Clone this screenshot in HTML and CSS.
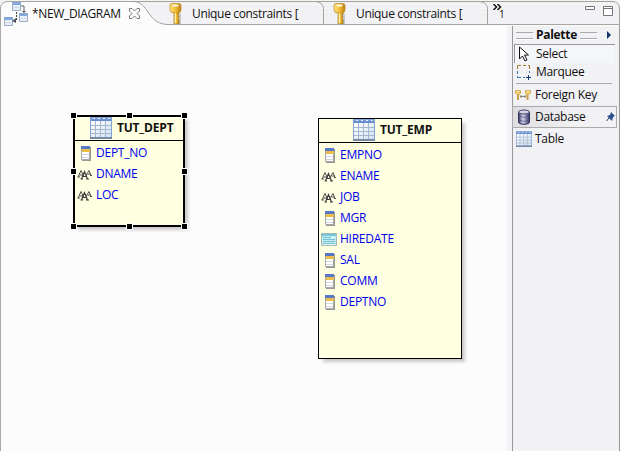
FILE: index.html
```
<!DOCTYPE html>
<html lang="en">
<head>
<meta charset="utf-8">
<title>NEW_DIAGRAM</title>
<link rel="stylesheet" href="styles.css">
</head>
<body>
<svg class="defs" aria-hidden="true">
  <defs>
    <linearGradient id="gold"><stop stop-color="#ffe587"/><stop offset=".5" stop-color="#f2be35"/><stop offset="1" stop-color="#b77e17"/></linearGradient>
    <linearGradient id="blueHead" x2="0" y2="1"><stop stop-color="#86a9dd"/><stop offset="1" stop-color="#5f86cc"/></linearGradient>
    <linearGradient id="cell" x2="1" y2="1"><stop stop-color="#fff"/><stop offset="1" stop-color="#d0e2f5"/></linearGradient>
    <linearGradient id="drum"><stop stop-color="#34345e"/><stop offset=".4" stop-color="#d8d8f0"/><stop offset="1" stop-color="#343467"/></linearGradient>
    <symbol id="key" viewBox="0 0 16 22">
      <path d="M6 10h5v2l-1 1 1 2-1 1 1 2v4H6z" fill="url(#gold)" stroke="#a77b29" stroke-width=".8"/>
      <path d="M4 1.500h7q2 0 2 2v4q0 3.500-3 3.500H6Q2 11 2 7.500v-4q0-2 2-2z" fill="url(#gold)" stroke="#c28e2c" stroke-width=".8"/>
      <path d="M5.500 3.500h4" stroke="#fff8dc" stroke-width="2" stroke-linecap="round"/>
      <path d="M7.500 11v10" stroke="#fff0a8"/>
      <path d="M12 12v10" stroke="#6e6755" opacity=".6"/>
    </symbol>
    <symbol id="table" viewBox="0 0 22 22">
      <path d="M0 0h22v22H0z" fill="#84a3d4"/>
      <path d="M1 0h20v4H1z" fill="url(#blueHead)"/>
      <path d="M1 4h20v16H1z" fill="url(#cell)"/>
      <path d="M1 8.500h20M1 12.500h20M1 16.500h20M5.500 4v16M10.500 4v16M15.500 4v16" stroke="#a7b6ca"/>
      <path d="M3 1.500h2M8 1.500h2M13 1.500h2M18 1.500h2" stroke="#e3edfc"/>
      <path d="M0 21h22" stroke="#7688a4" stroke-width="2"/>
    </symbol>
    <symbol id="column" viewBox="0 0 16 16">
      <path d="M5 2h9v14H5z" fill="#77777a" opacity=".75"/>
      <path d="M4.500 1.500h8v13h-8z" fill="#fff" stroke="#a5a6aa"/>
      <path d="M4 1h9v3H4z" fill="#5777c8"/>
      <path d="M5 4h8v3H5z" fill="#edbd4b"/>
      <path d="M5 9.500h7M5 12.500h7" stroke="#d3d7df"/>
    </symbol>
    <symbol id="text" viewBox="0 0 16 16">
      <g fill="none" stroke="#3d3b3f">
        <path d="m1 11 3-6.500L7 11M2.500 9H6M.500 11h2.500" stroke-width=".9"/>
        <path d="M4.500 13 7.500 5.500 10.500 13M6 10.500h3.500M3.500 13h2.500M9 13h3" stroke-width="1.200"/>
        <path d="m9 9.500 3-5 2 5M10.500 8h3M13 9.500h2" stroke-width=".9"/>
      </g>
    </symbol>
    <symbol id="date" viewBox="0 0 16 16">
      <path d="M.5 2.500h15v12H.5z" fill="#bfeaf0" stroke="#a3b7b4"/>
      <path d="M1 3h14v2H1z" fill="#76c5d8"/>
      <path d="M2 6.500h8M2 8.500h12M2 10.500h12M2 12.500h12" stroke="#78c4d2"/>
      <path d="M10 6.500h4M2 13.500h12" stroke="#edfafa"/>
    </symbol>
  </defs>
</svg>
<div class="editor">
  <header class="tabs">
    <svg class="tab-shape" width="620" height="26" viewBox="0 0 620 26" fill="none">
      <path d="M0 26V7Q2 1.500 8 1.500h125C149 1.500 147 24.500 168 24.500H620V26z" fill="#fcfcfc"/>
      <path d="M.5 26V7Q2 1.500 8 1.500H612Q619.500 1.500 619.500 9V26M133 1.500C149 1.500 147 24.500 168 24.500H620M316 1.500q7 1 7.500 7v16M480 1.500q7 1 7.500 7v16" stroke="#a5a4a0"/>
    </svg>
    <div class="tab tab-active">
      <svg class="diagram-icon" width="24" height="28" viewBox="0 0 24 28">
        <path d="M17 5h3v6M9 20h3" fill="none" stroke="#5b6270"/>
        <path d="M12.500 11v9" stroke="#444" stroke-dasharray="2 1"/>
        <g fill="#e8effa" stroke="#9eacc0"><path d="M8.500 1.500h8v8h-8zM15.500 12.500h8v8h-8zM.500 16.500h8v8H.500z"/></g>
        <path d="M8 1h9v3H8zM15 12h9v3h-9zM0 16h9v3H0z" fill="#86a7d8"/>
        <path d="M10 6.500h5M17 17.500h5M2 21.500h5" stroke="#c9d7eb"/>
        <path d="m8 20 4-3v5z" fill="#50545c"/>
        <path d="m18 10 2 2 2-2z" fill="#50545c"/>
      </svg>
      <span class="tab-name">*NEW_DIAGRAM</span>
      <svg class="close" width="11" height="11" viewBox="0 0 11 11"><path d="M.5.500h2.500l2.500 2.500L8 .500h2.500V3L8 5.500l2.500 2.500v2.500H8L5.500 8 3 10.500H.500V8L3 5.500.500 3z" fill="#fff" stroke="#77777a"/></svg>
    </div>
    <div class="tab tab-one"><svg width="16" height="22"><use href="#key"/></svg><span>Unique constraints [</span></div>
    <div class="tab tab-two"><svg width="16" height="22"><use href="#key"/></svg><span>Unique constraints [</span></div>
    <div class="more"><svg width="9" height="6" viewBox="0 0 9 6"><path d="m.5 0 3 3-3 3m4-6 3 3-3 3" fill="none" stroke="#111" stroke-width="1.500"/></svg><span>1</span></div>
    <svg class="window-buttons" width="30" height="12" viewBox="0 0 30 12" fill="#fff" stroke="#77777a"><path d="M.5 1.500h9v3h-9zM18.500 1.500h9v9h-9zM18.500 3.500h9"/></svg>
  </header>
  <div class="workspace">
    <main class="canvas">
      <section class="entity dept">
        <h2><svg width="22" height="22"><use href="#table"/></svg><span>TUT_DEPT</span></h2>
        <ul>
          <li><svg><use href="#column"/></svg><span>DEPT_NO</span></li>
          <li><svg><use href="#text"/></svg><span>DNAME</span></li>
          <li><svg><use href="#text"/></svg><span>LOC</span></li>
        </ul>
        <i class="handle n w"></i><i class="handle n c"></i><i class="handle n e"></i><i class="handle m w"></i><i class="handle m e"></i><i class="handle s w"></i><i class="handle s c"></i><i class="handle s e"></i>
      </section>
      <section class="entity emp">
        <h2><svg width="22" height="22"><use href="#table"/></svg><span>TUT_EMP</span></h2>
        <ul>
          <li><svg><use href="#column"/></svg><span>EMPNO</span></li>
          <li><svg><use href="#text"/></svg><span>ENAME</span></li>
          <li><svg><use href="#text"/></svg><span>JOB</span></li>
          <li><svg><use href="#column"/></svg><span>MGR</span></li>
          <li><svg><use href="#date"/></svg><span>HIREDATE</span></li>
          <li><svg><use href="#column"/></svg><span>SAL</span></li>
          <li><svg><use href="#column"/></svg><span>COMM</span></li>
          <li><svg><use href="#column"/></svg><span>DEPTNO</span></li>
        </ul>
      </section>
    </main>
    <aside class="palette">
      <div class="palette-title"><i class="grip"></i><b>Palette</b><i class="grip"></i><svg width="5" height="8" viewBox="0 0 5 8"><path d="M0 0v8l4-4z" fill="#12356f"/></svg></div>
      <div class="tool selected"><svg viewBox="0 0 16 16"><path d="M3.500 1v12l3-3 2.500 5 2-1-2.500-5h4z" fill="#fff" stroke="#111"/></svg><span>Select</span></div>
      <div class="tool marquee"><svg viewBox="0 0 16 16" fill="none"><path d="M1.500 5V1.500H5M7 1.500h3M12 1.500h1.500V5" stroke="#a57b2b"/><path d="M1.500 7v3M1.500 12v1.500H5M7 13.500h2M13.500 7v2" stroke="#3a72aa"/><path d="M10 13.500h5M12.500 11v5" stroke="#173b70"/></svg><span>Marquee</span></div>
      <div class="tool foreign"><svg viewBox="0 0 16 16"><path d="M3 7v6M12.500 7v6" stroke="#cda04a" stroke-width="2"/><path d="M.500 3.500h5v3l-1 1H2L.500 6zM10.500 3.500h5V6L14 7.500h-2.500l-1-1z" fill="#f0c868" stroke="#d7b05d"/><path d="M5 9.500h6M6 8v3M10 8v3" stroke="#8c877c"/><path d="M2 4.500h2M12 4.500h2" stroke="#fff2bd"/></svg><span>Foreign Key</span></div>
      <div class="drawer"><svg class="database" viewBox="0 0 16 16"><path d="M2.500 3v10c0 3 11 3 11 0V3" fill="url(#drum)" stroke="#303057"/><ellipse cx="8" cy="3" rx="5.500" ry="2" fill="#d5d5e7" stroke="#484872"/><path d="M3 7q5 3 10 0M3 11q5 3 10 0" fill="none" stroke="#444475" stroke-width=".6"/></svg><span>Database</span><svg class="pin" width="9" height="10" viewBox="0 0 9 10"><path d="m5 0 4 4-2 1-1 4-2-2-3-3 3-1z" fill="#2c4f8d"/><path d="M3 6 .500 9" stroke="#163a70"/></svg></div>
      <div class="tool table-tool"><svg viewBox="0 0 16 16"><use href="#table" width="16" height="16"/></svg><span>Table</span></div>
    </aside>
  </div>
</div>
</body>
</html>
```
FILE: styles.css
```
* { box-sizing: border-box; }
body { margin: 0; font: 12px/18px "Open Sans", "Noto Sans", sans-serif; color: #111; }
svg { display: block; flex: none; }
.defs { position: absolute; width: 0; height: 0; }
.editor { width: 620px; height: 451px; overflow: hidden; background: #fcfcfc; }
.tabs, .palette {
  background-color: #f1f2f6;
  background-image: radial-gradient(circle at .5px .5px, #fffbe0 0 .5px, transparent .6px), radial-gradient(circle at 2.5px 2.5px, #f8e9f5 0 .5px, transparent .6px), radial-gradient(circle at .5px 2.5px, #e7f1f8 0 .5px, transparent .6px);
  background-size: 4px 4px;
}
.tabs { position: relative; display: flex; height: 26px; }
.tab-shape { position: absolute; inset: 0; }
.tab { position: relative; display: flex; white-space: nowrap; letter-spacing: -.34px; }
.tab span { margin-top: 5px; }
.tab-active { width: 168px; padding-left: 4px; }
.diagram-icon { margin-top: 1px; }
.tab .tab-name { width: 89px; margin-left: 4px; letter-spacing: -.35px; }
.close { margin: 8px 0 0 8px; }
.tab-one { width: 164px; }
.tab-two { width: 160px; }
.tab > svg[width="16"] { margin-top: 2px; }
.tab-one span, .tab-two span { margin-left: 8px; }
.more { position: relative; width: 93px; display: flex; }
.more svg { margin: 4px 0 0 1px; }
.more span { margin: 7px 0 0 -3px; font-size: 10px; line-height: 15px; }
.window-buttons { position: relative; margin-top: 5px; }
.workspace { display: flex; height: 425px; border-left: 1px solid #aaa; border-right: 1px solid #999; }
.canvas { position: relative; width: 506px; }
.entity { position: absolute; border: 1px solid #000; background: #ffffe1; box-shadow: 4px 4px 3px -1px #ccc8c8; }
.dept { left: 72px; top: 89px; width: 112px; height: 112px; border-width: 2px; }
.emp { left: 317px; top: 92px; width: 144px; height: 241px; }
h2 { display: flex; margin: 0; height: 24px; border-bottom: 1px solid #000; font: 700 12px/18px "Open Sans", sans-serif; letter-spacing: -.2px; }
h2 span { margin: 2px 0 0 5px; }
.dept h2 { padding-left: 15px; }
.emp h2 { padding-left: 34px; }
ul { list-style: none; margin: 0; padding: 1px 0 0 2px; color: #0000f0; letter-spacing: -.25px; }
li { display: flex; align-items: center; height: 21px; gap: 3px; }
li svg { width: 16px; height: 16px; }
li span { margin-top: 1px; }
.handle { position: absolute; width: 7px; height: 7px; border: 1px solid #fff; background: #000; }
.n { top: -5px; } .m { top: 51px; } .s { bottom: -5px; }
.w { left: -5px; } .c { left: 51px; } .e { right: -5px; }
.palette { width: 112px; padding-right: 2px; border-left: 5px solid #f1f3f7; box-shadow: inset 1px 0 #999; letter-spacing: -.3px; }
.palette-title { display: flex; align-items: center; height: 18px; padding-left: 4px; }
.palette-title b { margin: 0 4px 0 3px; width: 40px; letter-spacing: -.3px; }
.grip { width: 17px; height: 7px; border-top: 1px solid #aaa; border-bottom: 1px solid #aaa; box-shadow: 0 1px #fff; }
.palette-title svg { margin-left: 10px; }
.tool { display: flex; align-items: center; height: 18px; gap: 3px; padding-left: 4px; white-space: nowrap; }
.tool svg, .database { width: 16px; height: 16px; }
.selected { height: 19px; margin: 0 2px; padding-left: 1px; gap: 4px; border-top: 1px solid #999; border-left: 1px solid #999; background: #f5f6f9; }
.marquee { gap: 4px; }
.foreign { height: 23px; margin: 2px 5px 0 4px; padding-left: 0; gap: 3px; border-top: 1px solid #aaa; }
.foreign svg { margin-left: -1px; margin-right: 1px; }
.drawer { display: flex; align-items: center; height: 22px; padding-left: 3px; gap: 3px; border: 1px solid #aaa; background: linear-gradient(90deg, #dedee1, #f2f2f4 60%); }
.drawer span { width: 51px; }
.pin { margin-left: 17px; }
.table-tool { height: 22px; }
```
